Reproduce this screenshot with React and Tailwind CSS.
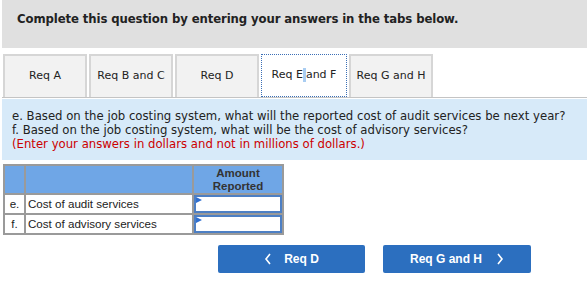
import React from 'react';

const tabs = ['Req A', 'Req B and C', 'Req D', 'Req E and F', 'Req G and H'];

const rows = [
  { key: 'e.', label: 'Cost of audit services' },
  { key: 'f.', label: 'Cost of advisory services' },
];

export default function App() {
  return (
    <div className="w-[587px] h-[281px] bg-white overflow-hidden font-['DejaVu_Sans',sans-serif] text-[#222]">
      {/* Instruction bar */}
      <div className="ml-[2px] h-[48px] bg-[#e0e0e0] flex items-center pl-[15px] pb-[8px]">
        <p className="text-[11.7px] font-bold tracking-[-0.1px]">
          Complete this question by entering your answers in the tabs below.
        </p>
      </div>

      {/* Tabs */}
      <div className="mt-[6px] ml-[2px] border-b border-[#c4c4c4] flex gap-[2px] pl-[1px]">
        {tabs.map((t, i) => {
          const active = i === 3;
          return (
            <div
              key={t}
              className={
                active
                  ? 'w-[86px] h-[43px] bg-white border border-dotted border-[#3b6fb6] flex items-center justify-center text-[11px]'
                  : 'w-[84px] h-[43px] bg-[#f2f2f2] border-2 border-b-0 border-[#d6d6d6] flex items-center justify-center text-[11px]'
              }
            >
              {active ? (
                <span>
                  Req E<span className="bg-[#a9cdf2] inline-block w-[3px] h-[14px] align-middle"></span>and F
                </span>
              ) : (
                t
              )}
            </div>
          );
        })}
      </div>

      {/* Question panel */}
      <div className="ml-[2px] mt-[1px] h-[61px] bg-[#d7eaf9] pl-[10px] pt-[10px] text-[11.7px] leading-[14px]">
        <p>e. Based on the job costing system, what will the reported cost of audit services be next year?</p>
        <p>f. Based on the job costing system, what will be the cost of advisory services?</p>
        <p className="text-[#cc0000]">(Enter your answers in dollars and not in millions of dollars.)</p>
      </div>

      {/* Answer table */}
      <table className="ml-[3px] mt-[4px] border-collapse font-['Liberation_Sans',Arial,sans-serif] text-[11.6px] text-[#222]">
        <thead>
          <tr className="h-[29px] bg-[#6fa6e6]">
            <th className="w-[21px] border-2 border-[#9a9a9a]"></th>
            <th className="w-[168px] border-2 border-[#9a9a9a]"></th>
            <th className="w-[90px] border-2 border-[#9a9a9a] font-bold text-[#333] leading-[13px] text-[11.5px]">
              Amount
              <br />
              Reported
            </th>
          </tr>
        </thead>
        <tbody>
          {rows.map((r) => (
            <tr key={r.key} className="h-[20px]">
              <td className="border-2 border-[#9a9a9a] text-center">{r.key}</td>
              <td className="border-2 border-[#9a9a9a] pl-[2px]">{r.label}</td>
              <td className="border-2 border-[#9a9a9a] p-0">
                <div className="relative h-[18px] border-2 border-[#4d7fc4] bg-white">
                  <svg className="absolute left-0 top-0" width="6" height="6" viewBox="0 0 6 6">
                    <polygon points="0,0 6,3 0,6" fill="#2f6fd0" />
                  </svg>
                </div>
              </td>
            </tr>
          ))}
        </tbody>
      </table>

      {/* Navigation buttons */}
      <div className="ml-[218px] mt-[10px] flex gap-[18px] font-['Liberation_Sans',Arial,sans-serif]">
        <button className="w-[147px] h-[28px] bg-[#2c6fbf] rounded-[2px] text-white text-[12px] font-bold flex items-center justify-center gap-[12px]">
          <svg width="8" height="12" viewBox="0 0 8 12">
            <polyline points="6,1 2,6 6,11" fill="none" stroke="white" strokeWidth="1.6" />
          </svg>
          Req D
        </button>
        <button className="w-[148px] h-[28px] bg-[#2c6fbf] rounded-[2px] text-white text-[12px] font-bold flex items-center justify-center gap-[14px]">
          Req G and H
          <svg width="8" height="12" viewBox="0 0 8 12">
            <polyline points="2,1 6,6 2,11" fill="none" stroke="white" strokeWidth="1.6" />
          </svg>
        </button>
      </div>
    </div>
  );
}
